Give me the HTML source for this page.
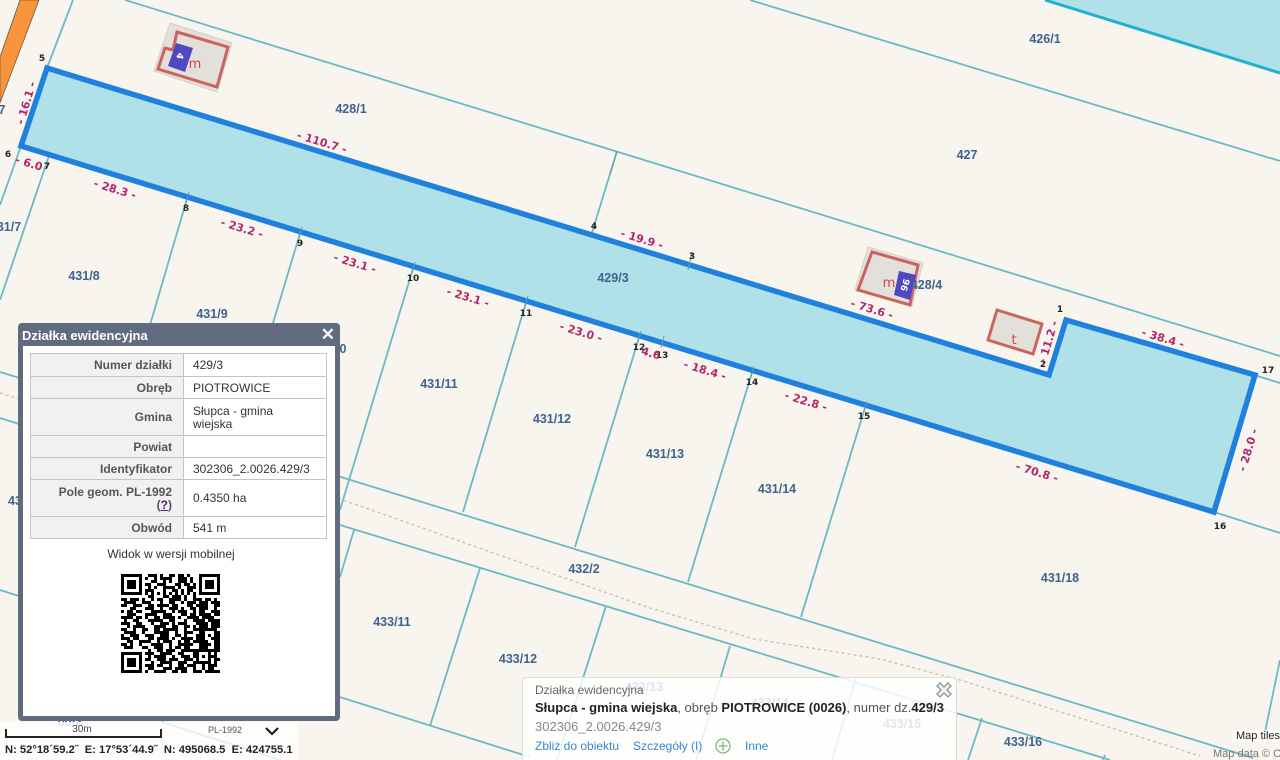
<!DOCTYPE html>
<html><head><meta charset="utf-8"><style>
html,body{margin:0;padding:0;width:1280px;height:760px;overflow:hidden;background:#f8f5ee;font-family:"Liberation Sans",sans-serif}
svg.map{position:absolute;left:0;top:0}
.n{font:bold 12.5px "Liberation Sans",sans-serif;fill:#3f6290;text-anchor:middle}
.p{font:bold 9px "DejaVu Sans",sans-serif;fill:#222;text-anchor:middle}
.d{font:bold 11px "DejaVu Sans",sans-serif;fill:#b5266f;text-anchor:middle}
.l{stroke:#6cb8c7;stroke-width:1.8;fill:none}
.panel{position:absolute;left:18px;top:323px;width:312px;height:370px;padding:23px 5px 5px;background:#606b80;border-radius:4px}
.title{position:absolute;left:4px;top:3px;color:#fff;font:bold 13px/19px "Liberation Sans",sans-serif}
.x{position:absolute;right:5px;top:2px;color:#fff;font:bold 17px/20px "Liberation Sans",sans-serif}
.inner{background:#fff;width:312px;height:370px;position:relative}
table{position:absolute;left:7px;top:7px;width:297px;border-collapse:collapse;font-size:12px;line-height:13px;color:#333;table-layout:fixed}
td{border:1px solid #c4c4c4;padding:1px 9px 0 9px;height:20px}
td.k{width:131px;padding:1px 11px 0 10px;box-sizing:content-box;background:#f1f1f1;text-align:right;font-weight:bold;color:#555}
td a{color:#551a8b;text-decoration:underline}
.mob{position:absolute;left:0;width:296px;top:201px;text-align:center;font-size:12px;color:#333}
.qr{position:absolute;left:121px;top:574px}
.coords{position:absolute;left:0;top:722px;width:298px;height:38px;background:rgba(255,255,255,.8)}
.scale{position:absolute;left:5px;top:7px;width:153px;height:7px;border:solid #222;border-width:0 2px 2px 2px}
.st{position:absolute;left:67px;top:2px;font-size:10px;color:#444;width:30px;text-align:center}
.pl{position:absolute;left:208px;top:3px;font-size:9px;color:#555}
.ct{position:absolute;left:5px;top:21px;font:bold 11.2px/14px "Liberation Sans",sans-serif;color:#222;white-space:pre}
.popup{position:absolute;left:522px;top:677px;width:435px;height:83px;background:rgba(255,255,255,.84);border:1px solid #ddd;border-bottom:0;border-radius:4px 4px 0 0;box-sizing:border-box}
.popup div{position:absolute;left:12px;white-space:nowrap}
.attr{position:absolute;font-size:11px;white-space:nowrap}
</style></head><body>
<svg class="map" width="1280" height="760" viewBox="0 0 1280 760">
<rect width="1280" height="760" fill="#f8f5ee"/>
<polygon points="1045,0 1280,73 1280,0" fill="#b0e0e8"/>
<path d="M1045 0L1280 73" stroke="#20b0d0" stroke-width="3" fill="none"/>
<polygon points="20,0 39,0 0,103 0,57" fill="#f7943c" stroke="#6d5a45" stroke-width=".8"/>
<g class="l">
<path d="M125 0L1280 356M750 0L1280 161"/>
<path d="M73 0L47 68M21 146L0 205M51 150L0 300"/>
<path d="M617 151L591 236M189 192L150 325M302 227L273 323M415 262L340 510M528 296L463 512M641 331L575 547M754 366L688 582M867 401L801 617"/>
<path d="M0 372L1253 758M0 418L340 525L1110 760M0 590L530 757M162 722L280 760"/>
<path d="M354 530L340 577M480 568L430 726M606 606L557 760M730 646L696 760M982 718L968 760M1280 660L1265 732M1105 755L1103 760"/>
<path d="M1254 375L1280 383M1214 512L1280 533"/>
<path d="M856 677L832 760"/>
</g>
<polyline points="0,393 340,499 650,608 754,639 880,659 960,680 1200,756" fill="none" stroke="#c9c5bd" stroke-width="1.5" stroke-dasharray="3 3"/>
<polygon points="47,68 1049,375 1066,320 1255,375 1214,512 21,146" fill="#b0e0e8" stroke="#1f80dd" stroke-width="5.5"/>
<path d="M692 252L688 270M664 336L661 348M189 192L186 203M302 227L299 238M415 262L412 273M528 296L525 307M641 331L638 342M754 366L751 377M867 401L864 412M617 151L610 175" stroke="#6e9aa5" stroke-width="1" fill="none"/>
<polygon points="170,23 232,43 217,92 154,71" fill="#e3dfdb" stroke="#d8cfc8"/>
<polygon points="177,32 228,47 217,87 158,69 165,48 173,50" fill="#e3dfdb" stroke="#c9655c" stroke-width="3"/>
<polygon points="176,43 193,48 185,72 168,66" fill="#5048c0"/>
<text x="195" y="68" font-family="DejaVu Sans" font-size="13" fill="#d04545" text-anchor="middle">m</text>
<text transform="translate(180 56) rotate(107)" font-family="DejaVu Sans" font-weight="bold" font-size="9" fill="#fff" text-anchor="middle" y="3">4</text>
<polygon points="868,247 923,263 912,306 855,290" fill="#e3dfdb" stroke="#d8cfc8"/>
<polygon points="872,252 918,265 910,305 858,290" fill="#e3dfdb" stroke="#c9655c" stroke-width="3"/>
<polygon points="899,271 916,275 910,300 894,295" fill="#5048c0"/>
<text x="889" y="287" font-family="DejaVu Sans" font-size="13" fill="#d04545" text-anchor="middle">m</text>
<text transform="translate(905 285) rotate(107)" font-family="DejaVu Sans" font-weight="bold" font-size="9" fill="#fff" text-anchor="middle" y="3">96</text>
<polygon points="997,310 1042,324 1033,354 988,340" fill="#e3dfdb" stroke="#c9655c" stroke-width="3"/>
<text x="1014" y="344" font-family="DejaVu Sans" font-size="13" fill="#c84a4a" text-anchor="middle">t</text>
<g class="n">
<text class="n" x="1045" y="43">426/1</text><text class="n" x="351" y="113">428/1</text><text class="n" x="967" y="159">427</text><text class="n" x="613" y="282">429/3</text><text class="n" x="84" y="280">431/8</text><text class="n" x="212" y="318">431/9</text><text class="n" x="343" y="353">0</text><text class="n" x="439" y="388">431/11</text><text class="n" x="552" y="423">431/12</text><text class="n" x="665" y="458">431/13</text><text class="n" x="777" y="493">431/14</text><text class="n" x="1060" y="582">431/18</text><text class="n" x="584" y="573">432/2</text><text class="n" x="392" y="626">433/11</text><text class="n" x="518" y="663">433/12</text><text class="n" x="644" y="691">433/13</text><text class="n" x="770" y="707">433/14</text><text class="n" x="902" y="728">433/15</text><text class="n" x="1023" y="746">433/16</text><text class="n" x="15" y="505">43</text><text class="n" x="9" y="231">31/7</text><text class="n" x="2" y="114">7</text><text class="n" x="926.500" y="289">428/4</text><text class="n" x="70" y="726">00/2</text>
</g>
<text class="p" x="42" y="61">5</text><text class="p" x="8" y="157">6</text><text class="p" x="47" y="169">7</text><text class="p" x="186" y="211">8</text><text class="p" x="300" y="246">9</text><text class="p" x="413" y="281">10</text><text class="p" x="526" y="316">11</text><text class="p" x="639" y="350">12</text><text class="p" x="662" y="358">13</text><text class="p" x="752" y="385">14</text><text class="p" x="864" y="419">15</text><text class="p" x="1220" y="529">16</text><text class="p" x="1268" y="373">17</text><text class="p" x="1060" y="312">1</text><text class="p" x="1043" y="367">2</text><text class="p" x="692" y="259">3</text><text class="p" x="594" y="229">4</text>
<g>
<text class="d" transform="translate(322 142) rotate(17)" y="4">- 110.7 -</text>
<text class="d" transform="translate(26 103) rotate(-73)" y="4">- 16.1 -</text>
<text class="d" transform="translate(29 163) rotate(17)" y="4">- 6.0</text>
<text class="d" transform="translate(115 189) rotate(17)" y="4">- 28.3 -</text>
<text class="d" transform="translate(242 228) rotate(17)" y="4">- 23.2 -</text>
<text class="d" transform="translate(355 263) rotate(17)" y="4">- 23.1 -</text>
<text class="d" transform="translate(468 297) rotate(17)" y="4">- 23.1 -</text>
<text class="d" transform="translate(581 332) rotate(17)" y="4">- 23.0 -</text>
<text class="d" transform="translate(651 353) rotate(17)" y="4">4.6</text>
<text class="d" transform="translate(705 370) rotate(17)" y="4">- 18.4 -</text>
<text class="d" transform="translate(806 401) rotate(17)" y="4">- 22.8 -</text>
<text class="d" transform="translate(1037 472) rotate(17)" y="4">- 70.8 -</text>
<text class="d" transform="translate(1248 450) rotate(-73)" y="4">- 28.0 -</text>
<text class="d" transform="translate(1163 338) rotate(17)" y="4">- 38.4 -</text>
<text class="d" transform="translate(1048 342) rotate(-73)" y="4">- 11.2 -</text>
<text class="d" transform="translate(872 309) rotate(17)" y="4">- 73.6 -</text>
<text class="d" transform="translate(642 239) rotate(17)" y="4">- 19.9 -</text>
</g>
</svg>

<div class="panel">
<div class="title">Działka ewidencyjna</div><div class="x">✕</div>
<div class="inner">
<table>
<tr><td class="k" style="height:21px">Numer działki</td><td>429/3</td></tr>
<tr><td class="k">Obręb</td><td>PIOTROWICE</td></tr>
<tr><td class="k" style="height:35px">Gmina</td><td>Słupca - gmina<br>wiejska</td></tr>
<tr><td class="k">Powiat</td><td></td></tr>
<tr><td class="k">Identyfikator</td><td>302306_2.0026.429/3</td></tr>
<tr><td class="k" style="height:35px">Pole geom. PL-1992<br>(<a>?</a>)</td><td>0.4350 ha</td></tr>
<tr><td class="k">Obwód</td><td>541 m</td></tr>
</table>
<div class="mob">Widok w wersji mobilnej</div>
</div></div>

<svg class="qr" width="99" height="99" viewBox="0 0 33 33" shape-rendering="crispEdges">
<g fill="none" stroke="#000" stroke-width="1">
<path d="M.5 .5h6v6h-6zM26.500 .5h6v6h-6zM.5 26.500h6v6h-6z"/>
<path d="M9 .5h3m1 0h1m2 0h2m1 0h2m1 0h1M8 1.500h1m2 0h1m1 0h4m2 0h3m1 0h1M10 2.500h2m2 0h1m1 0h1m2 0h3m1 0h1M8 3.500h2m2 0h3m3 0h2m1 0h2m1 0h1M9 4.500h1m1 0h1m2 0h4m1 0h1m2 0h3M8 5.500h3m3 0h1m2 0h2m1 0h1m1 0h2M8 6.500h1m1 0h1m1 0h1m1 0h1m1 0h1m1 0h1m1 0h1m1 0h1m1 0h1M9 7.500h2m3 0h2m1 0h3m1 0h1m2 0h1"/>
<path d="M0 8.500h2m1 0h3m1 0h1m2 0h1m1 0h2m2 0h4m1 0h1m2 0h3m1 0h2m1 0h1"/>
<path d="M1 9.500h4m2 0h3m3 0h1m2 0h2m2 0h1m1 0h3m1 0h2"/>
<path d="M0 10.500h2m2 0h3m2 0h2m1 0h4m1 0h2m3 0h2m1 0h3"/>
<path d="M3 11.500h2m3 0h3m2 0h1m2 0h3m1 0h1m2 0h2m2 0h2"/>
<path d="M0 12.500h1m1 0h2m1 0h2m3 0h5m2 0h1m1 0h3m2 0h1m1 0h2"/>
<path d="M2 13.500h3m3 0h4m2 0h3m3 0h2m1 0h2m2 0h1"/>
<path d="M0 14.500h4m1 0h2m1 0h1m2 0h2m1 0h4m1 0h1m2 0h4m1 0h2"/>
<path d="M1 15.500h1m2 0h2m3 0h5m2 0h2m3 0h1m2 0h4"/>
<path d="M0 16.500h3m2 0h2m3 0h1m2 0h3m1 0h1m1 0h3m3 0h3"/>
<path d="M2 17.500h1m1 0h4m3 0h4m2 0h2m2 0h2m1 0h1m2 0h2"/>
<path d="M0 18.500h2m2 0h1m2 0h2m2 0h2m1 0h5m2 0h1m2 0h4"/>
<path d="M1 19.500h4m2 0h1m3 0h5m2 0h1m2 0h3m2 0h1"/>
<path d="M0 20.500h1m2 0h3m2 0h3m2 0h3m2 0h2m1 0h1m3 0h3"/>
<path d="M0 21.500h3m1 0h2m3 0h2m1 0h4m1 0h1m2 0h4m2 0h1"/>
<path d="M2 22.500h2m2 0h4m2 0h1m1 0h3m2 0h1m1 0h2m1 0h3"/>
<path d="M0 23.500h2m1 0h1m2 0h1m3 0h4m2 0h1m2 0h5m2 0h2"/>
<path d="M1 24.500h3m3 0h2m2 0h3m2 0h1m1 0h2m1 0h2m3 0h1"/>
<path d="M9 25.500h1m2 0h2m1 0h3m2 0h7m1 0h2"/>
<path d="M8 26.500h3m2 0h4m2 0h2m3 0h1m3 0h1m2 0h1"/>
<path d="M9 27.500h1m1 0h4m2 0h1m2 0h3m1 0h1m1 0h1m1 0h1m1 0h2"/>
<path d="M8 28.500h2m2 0h3m1 0h3m2 0h3m1 0h1m3 0h1m2 0h1"/>
<path d="M10 29.500h1m2 0h4m2 0h3m2 0h5m2 0h1"/>
<path d="M8 30.500h3m1 0h2m2 0h1m2 0h2m1 0h3m2 0h1m1 0h3"/>
<path d="M9 31.500h2m3 0h3m1 0h4m2 0h1m2 0h1m1 0h2"/>
<path d="M8 32.500h1m2 0h4m2 0h2m1 0h2m2 0h3m1 0h2m1 0h1"/>
<path d="M27 9.500h2m1 0h3M28 10.500h1m2 0h2M26 11.500h3m2 0h1M27 12.500h1m2 0h3M26 13.500h4m1 0h2M28 14.500h3M25 15.500h2m2 0h4M27 16.500h2m1 0h3M26 17.500h2m2 0h3M28 18.500h4M26 19.500h2m3 0h2M29 20.500h1m1 0h2M25 21.500h3m2 0h3M27 22.500h2m2 0h2M28 23.500h2m1 0h2M26 24.500h3m2 0h2M30 25.500h3M31 28.500h2M30 32.500h3"/>
</g>
<path d="M2 2h3v3h-3zM28 2h3v3h-3zM2 28h3v3h-3z" fill="#000"/>
<rect x="25" y="25" width="5" height="5" fill="#000"/><rect x="26" y="26" width="3" height="3" fill="#fff"/><rect x="27" y="27" width="1" height="1" fill="#000"/>
</svg>

<div class="coords">
<div class="scale"></div><div class="st">30m</div>
<div class="pl">PL-1992</div>
<svg style="position:absolute;left:265px;top:5px" width="14" height="9" viewBox="0 0 14 9"><path d="M1 1L7 7L13 1" stroke="#111" stroke-width="2" fill="none"/></svg>
<div class="ct">N: 52°18´59.2˝  E: 17°53´44.9˝  N: 495068.5  E: 424755.1</div>
</div>

<div class="popup">
<div style="top:5px;font-size:12px;color:#666">Działka ewidencyjna</div>
<div style="top:22px;font-size:13px;color:#555"><b style="color:#222">Słupca - gmina wiejska</b>, obręb <b style="color:#222">PIOTROWICE (0026)</b>, numer dz.<b style="color:#222">429/3</b></div>
<div style="top:41px;font-size:13px;color:#888">302306_2.0026.429/3</div>
<div style="top:61px;font-size:12px;color:#3a87c8">Zbliż do obiektu</div>
<div style="top:61px;left:110px;font-size:12px;color:#3a87c8">Szczegóły (I)</div>
<svg style="position:absolute;left:192px;top:60px" width="16" height="16" viewBox="0 0 16 16"><circle cx="8" cy="8" r="7" fill="none" stroke="#7cb87c" stroke-width="1.3"/><path d="M8 3.500v9M3.500 8h9" stroke="#7cb87c" stroke-width="1.3"/></svg>
<div style="top:61px;left:222px;font-size:12px;color:#3a87c8">Inne</div>
<svg style="position:absolute;left:413px;top:4px" width="16" height="16" viewBox="0 0 16 16"><path d="M4 1L8 5L12 1L15 4L11 8L15 12L12 15L8 11L4 15L1 12L5 8L1 4Z" fill="#eef0ee" stroke="#8a9a98" stroke-width="1.3"/></svg>
</div>

<div class="attr" style="left:1232px;top:730px;width:48px;padding-left:4px;box-sizing:border-box;background:rgba(255,255,255,.7);color:#222;overflow:hidden">Map tiles</div>
<div class="attr" style="left:1213px;top:748px;width:67px;overflow:hidden;color:#777">Map data © OpenStreetMap</div>
</body></html>
